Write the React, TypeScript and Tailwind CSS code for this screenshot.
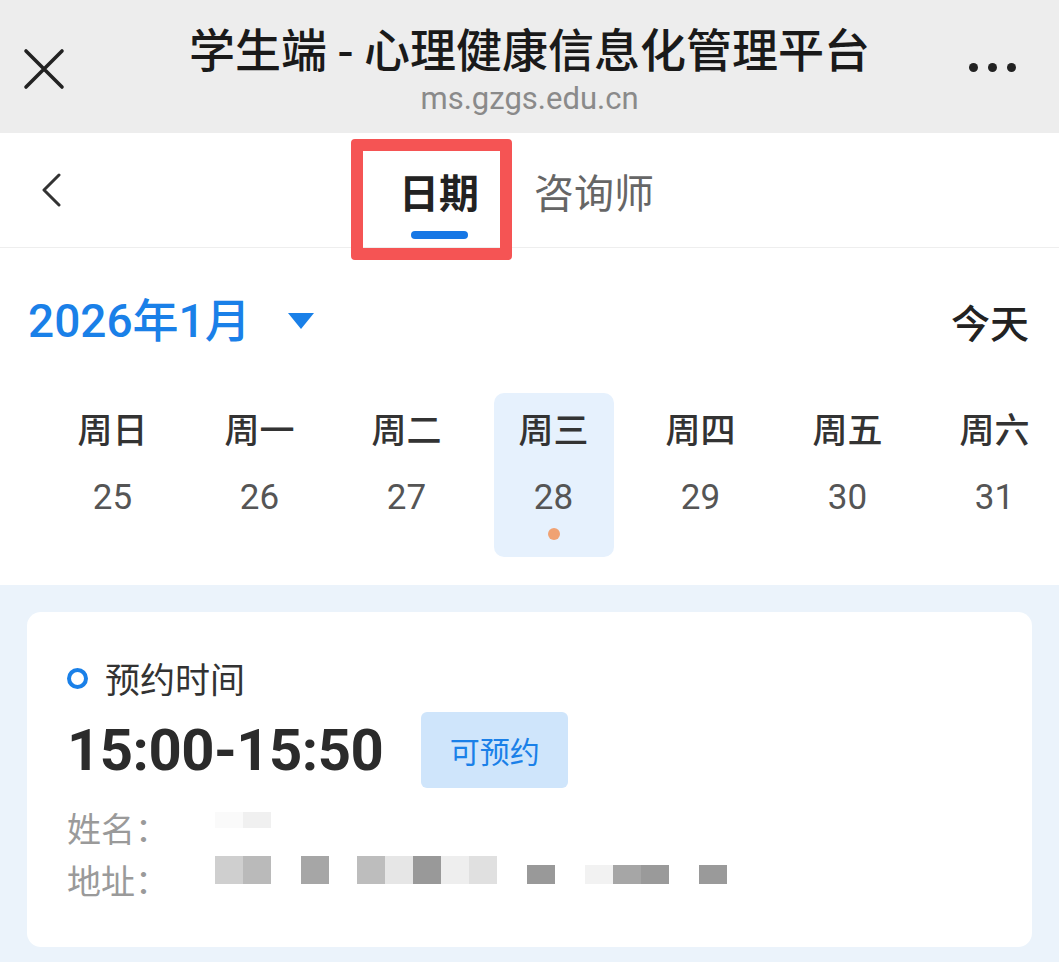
import React from "react";

// ==================== CONSTANTS ====================
const FONT = {
  fontFamily: '"Noto Sans CJK SC", "Noto Sans", sans-serif',
};
const NUM_FONT = {
  fontFamily: 'Roboto, "Noto Sans CJK SC", sans-serif',
};

const WEEK = [
  { label: "周日", day: 25 },
  { label: "周一", day: 26 },
  { label: "周二", day: 27 },
  { label: "周三", day: 28, active: true },
  { label: "周四", day: 29 },
  { label: "周五", day: 30 },
  { label: "周六", day: 31 },
];

// mosaic pieces over the address line
const ADDR_BLOCKS = [
  { x: 215, c: "#cfcfcf" },
  { x: 243, c: "#bababa" },
  { x: 301, c: "#a6a6a6" },
  { x: 357, c: "#bdbdbd" },
  { x: 385, c: "#e6e6e6" },
  { x: 413, c: "#999999" },
  { x: 441, c: "#eeeeee" },
  { x: 469, c: "#e0e0e0" },
  { x: 527, c: "#999999", low: true },
  { x: 585, c: "#f2f2f2", low: true },
  { x: 613, c: "#a6a6a6", low: true },
  { x: 641, c: "#9a9a9a", low: true },
  { x: 699, c: "#9a9a9a", low: true },
];

// ==================== MAIN COMPONENT ====================
export default function App() {
  return (
    <div className="w-[1059px] h-[962px] overflow-hidden bg-[#ebf3fb]" style={FONT}>
      <TopBar />
      <TabBar />
      <CalendarStrip />
      <div className="px-[27px] pt-[27px]">
        <SlotCard />
      </div>
    </div>
  );
}

// ==================== TOP BAR ====================
function TopBar() {
  return (
    <div className="h-[133px] bg-[#ededed] flex items-start">
      <div className="w-[120px] pl-[23px] pt-[48px]">
        <svg width="42" height="42" viewBox="0 0 42 42">
          <path d="M3 3 L39 39 M39 3 L3 39" stroke="#222" strokeWidth="3.6" strokeLinecap="round" />
        </svg>
      </div>
      <div className="flex-1 flex flex-col items-center pt-[19px]">
        <div className="text-[46px] leading-[56px] font-medium text-[#1a1a1a] whitespace-nowrap">
          学生端 - 心理健康信息化管理平台
        </div>
        <div className="text-[31px] leading-[38px] text-[#8a8a8a] mt-[5px]" style={NUM_FONT}>
          ms.gzgs.edu.cn
        </div>
      </div>
      <div className="w-[120px] flex justify-start gap-[10px] pl-[30px] pt-[63px]">
        <span className="w-[9px] h-[9px] rounded-full bg-[#222]" />
        <span className="w-[9px] h-[9px] rounded-full bg-[#222]" />
        <span className="w-[9px] h-[9px] rounded-full bg-[#222]" />
      </div>
    </div>
  );
}

// ==================== TAB BAR ====================
function TabBar() {
  return (
    <div className="relative h-[115px] bg-white border-b border-[#eeeeee] flex items-start">
      <div className="w-[200px] pl-[40px] pt-[40px]">
        <svg width="22" height="34" viewBox="0 0 22 34">
          <path d="M19 2 L4 17 L19 32" fill="none" stroke="#333" strokeWidth="3" strokeLinecap="round" strokeLinejoin="round" />
        </svg>
      </div>
      <div className="flex items-start pt-[34px]">
        <div className="flex flex-col items-center w-[80px] ml-[199px]">
          <span className="text-[40px] leading-[48px] font-bold text-[#222]">日期</span>
          <span className="mt-[16px] w-[57px] h-[8px] rounded-full bg-[#1677e5]" />
        </div>
        <span className="ml-[55px] text-[40px] leading-[48px] text-[#666]">咨询师</span>
      </div>
      {/* annotation box */}
      <div className="absolute left-[351px] top-[6px] w-[161px] h-[121px] border-[12px] border-[#f55454] rounded-[4px] pointer-events-none z-10" />
    </div>
  );
}

// ==================== CALENDAR ====================
function CalendarStrip() {
  return (
    <div className="bg-white h-[337px]">
      <div className="flex items-center justify-between pl-[28px] pr-[30px] pt-[46px] h-[100px]">
        <div className="flex items-center">
          <span className="text-[46px] leading-[54px] font-medium text-[#1a80e8]" style={NUM_FONT}>
            2026年1月
          </span>
          <svg className="ml-[36px]" width="28" height="18" viewBox="0 0 28 18">
            <path d="M1 1 H27 L14 17 Z" fill="#1a80e8" />
          </svg>
        </div>
        <span className="text-[39px] leading-[48px] font-medium text-[#222]">今天</span>
      </div>
      <div className="flex pl-[39px] pt-[45px] overflow-hidden">
        {WEEK.map((d) => (
          <div key={d.day} className="w-[147px] shrink-0 flex justify-center">
            <div
              className={`w-[120px] h-[164px] rounded-[10px] flex flex-col items-center pt-[13px] ${
                d.active ? "bg-[#e6f1fd]" : ""
              }`}
            >
              <span className="text-[35px] leading-[44px] font-medium text-[#333]">{d.label}</span>
              <span className="mt-[28px] text-[35px] leading-[40px] text-[#555]" style={NUM_FONT}>
                {d.day}
              </span>
              {d.active && <span className="mt-[10px] w-[12px] h-[12px] rounded-full bg-[#f0a273]" />}
            </div>
          </div>
        ))}
      </div>
    </div>
  );
}

// ==================== SLOT CARD ====================
function SlotCard() {
  return (
    <div className="relative bg-white rounded-[14px] h-[335px] pl-[40px] pt-[44px]">
      <div className="flex items-center">
        <span className="w-[21px] h-[21px] rounded-full border-[4px] border-[#1a80e8]" />
        <span className="ml-[17px] text-[35px] leading-[44px] text-[#333]">预约时间</span>
      </div>
      <div className="flex items-center mt-[12px]">
        <span className="text-[58px] leading-[76px] font-bold text-[#2b2b2b] tracking-[-0.5px]" style={NUM_FONT}>
          15:00-15:50
        </span>
        <span className="ml-[38px] w-[147px] h-[76px] rounded-[6px] bg-[#cfe5fb] flex items-center justify-center text-[30px] text-[#1a80e8]">
          可预约
        </span>
      </div>
      <div className="mt-[14px] text-[34px] leading-[52px] text-[#9a9a9a]">姓名：</div>
      <div className="text-[34px] leading-[52px] text-[#9a9a9a]">地址：</div>

      {/* blurred personal data */}
      <div className="absolute left-[188px] top-[200px] w-[28px] h-[16px] bg-[#fafafa]" />
      <div className="absolute left-[216px] top-[200px] w-[28px] h-[16px] bg-[#f0f0f0]" />
      {ADDR_BLOCKS.map((b) => (
        <div
          key={b.x}
          className={`absolute w-[28px] ${b.low ? "top-[253px] h-[19px]" : "top-[244px] h-[28px]"}`}
          style={{ left: b.x - 27, backgroundColor: b.c }}
        />
      ))}
    </div>
  );
}
